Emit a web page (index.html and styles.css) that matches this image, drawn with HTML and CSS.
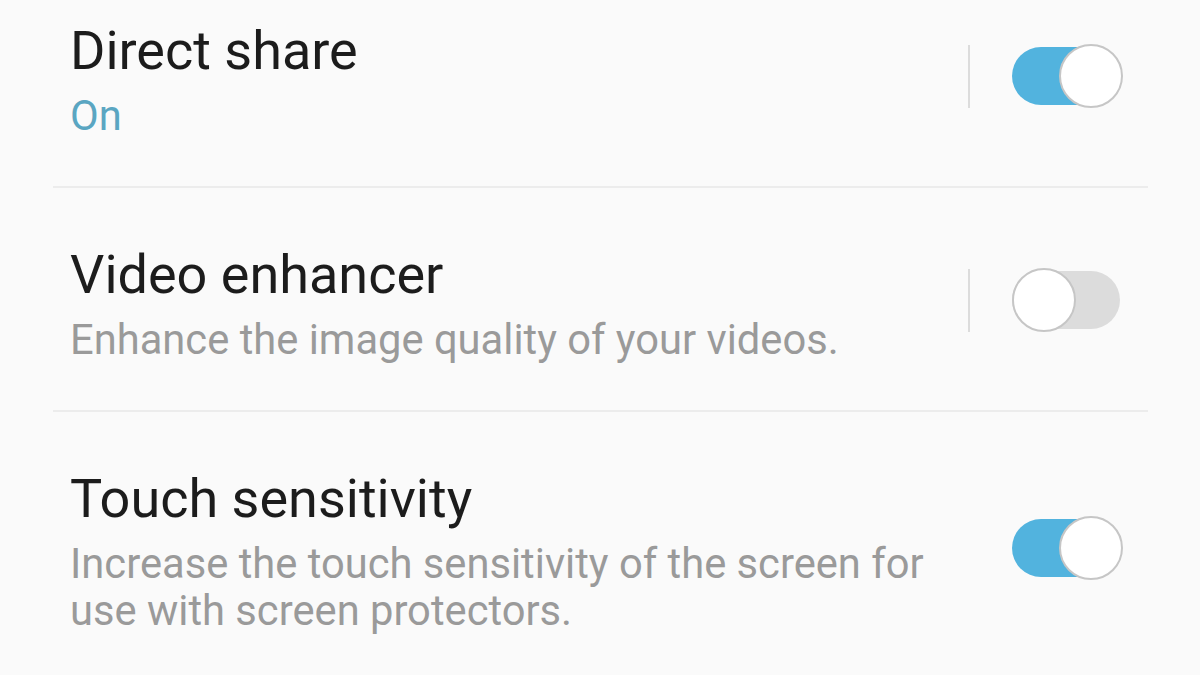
FILE: index.html
```html
<!DOCTYPE html>
<html>
<head>
<meta charset="utf-8">
<link rel="stylesheet" href="styles.css">
</head>
<body>
<div class="screen">
  <div class="list">
    <div class="row">
      <div class="text">
        <div class="title">Direct share</div>
        <div class="sub on">On</div>
      </div>
      <div class="ctrl">
        <span class="sep"></span>
        <span class="switch checked"><span class="track"></span><span class="thumb"></span></span>
      </div>
    </div>
    <div class="divider"></div>
    <div class="row">
      <div class="text">
        <div class="title">Video enhancer</div>
        <div class="sub">Enhance the image quality of your videos.</div>
      </div>
      <div class="ctrl">
        <span class="sep"></span>
        <span class="switch"><span class="track"></span><span class="thumb"></span></span>
      </div>
    </div>
    <div class="divider"></div>
    <div class="row">
      <div class="text">
        <div class="title">Touch sensitivity</div>
        <div class="sub">Increase the touch sensitivity of the screen for use with screen protectors.</div>
      </div>
      <div class="ctrl">
        <span class="sep hidden"></span>
        <span class="switch checked"><span class="track"></span><span class="thumb"></span></span>
      </div>
    </div>
  </div>
</div>
</body>
</html>
```

FILE: styles.css
```css
html, body {
  margin: 0;
  padding: 0;
  background: #fafafa;
}
.screen {
  width: 1200px;
  height: 675px;
  overflow: hidden;
  background: #fafafa;
  font-family: Roboto, "Noto Sans", sans-serif;
}
.list {
  margin: -36px 52px 0 53px;
}
.row {
  display: flex;
  align-items: center;
  padding: 55px 25px 47px 17px;
}
.text {
  flex: 1;
  min-width: 0;
  padding-right: 20px;
}
.title {
  font-size: 54px;
  line-height: 64px;
  color: #1c1c1c;
}
.sub {
  margin-top: 9px;
  font-size: 41.7px;
  line-height: 47px;
  color: #9a9a9a;
}
.sub.on {
  color: #5aa6c2;
}
.divider {
  height: 2px;
  background: #ececec;
}
.ctrl {
  display: flex;
  align-items: center;
  gap: 42px;
  flex: none;
  margin-bottom: 6px;
}
.sep {
  width: 2px;
  height: 63px;
  background: #dcdcdc;
}
.sep.hidden {
  visibility: hidden;
}
.switch {
  position: relative;
  width: 111px;
  height: 64px;
  display: block;
}
.track {
  position: absolute;
  left: 0;
  top: 3px;
  width: 108px;
  height: 58px;
  border-radius: 29px;
  background: #dcdcdc;
}
.switch.checked .track {
  background: #52b3de;
}
.thumb {
  position: absolute;
  top: 0;
  left: 0;
  width: 60px;
  height: 60px;
  border-radius: 50%;
  background: #ffffff;
  border: 2px solid #c6c6c6;
}
.switch.checked .thumb {
  left: auto;
  right: 0;
}
```
